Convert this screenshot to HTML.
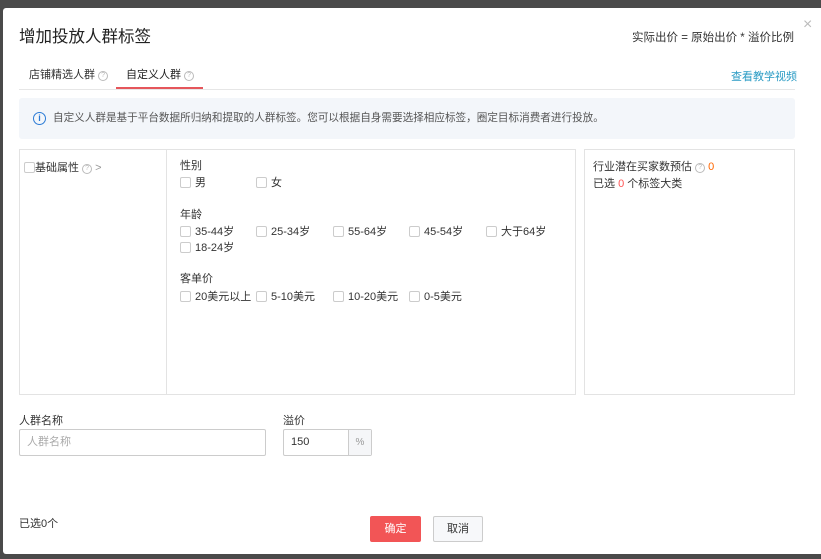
<!DOCTYPE html><html><head><meta charset="utf-8"><style>
*{margin:0;padding:0;box-sizing:border-box}
body{width:821px;height:559px;background:#4a4a4a;font-family:"Liberation Sans","Noto Sans CJK SC",sans-serif;font-size:11px;line-height:13px;color:#333;position:relative;overflow:hidden}
.a{position:absolute;white-space:nowrap}
.t{margin-top:2px}
.m{position:absolute;left:3px;top:8px;width:830px;height:546px;background:#fff;border-radius:3px}
.cb{display:inline-block;width:11px;height:11px;border:1px solid #ccc;border-radius:2px;vertical-align:-2px;margin-right:4px;background:#fff}
.q{display:inline-block;width:10px;height:10px;border:1px solid #bbb;border-radius:50%;font-size:7px;line-height:8px;text-align:center;color:#bbb;vertical-align:1px}
.o{color:#f60}
</style></head><body>
<div class="m"></div>
<div class="a" style="left:19px;top:27px;font-size:16.5px;line-height:20px;color:#222">增加投放人群标签</div>
<div class="a" style="left:632px;top:32px;font-size:11.5px;color:#333">实际出价 = 原始出价 * 溢价比例</div>
<div class="a" style="left:803px;top:18px;font-size:16px;color:#bbb">×</div>
<div class="a" style="left:29px;top:69px;color:#333">店铺精选人群 <span class="q">?</span></div>
<div class="a" style="left:126px;top:69px;color:#222">自定义人群 <span class="q">?</span></div>
<div class="a" style="left:116px;top:87px;width:87px;height:2px;background:#e5565b"></div>
<div class="a" style="left:19px;top:89px;width:776px;height:1px;background:#e6e6e6"></div>
<div class="a" style="left:731px;top:71px;color:#2a9bc4">查看教学视频</div>
<div class="a" style="left:19px;top:98px;width:776px;height:41px;background:#f3f6fa;border-radius:3px"></div>
<div class="a" style="left:33px;top:112px;width:13px;height:13px;border:1.3px solid #2b7bd6;border-radius:50%;color:#2b7bd6;font-size:9px;line-height:11px;text-align:center;font-weight:bold">i</div>
<div class="a" style="left:53px;top:112px;font-size:10.6px;color:#555">自定义人群是基于平台数据所归纳和提取的人群标签。您可以根据自身需要选择相应标签，圈定目标消费者进行投放。</div>
<div class="a" style="left:19px;top:149px;width:557px;height:246px;border:1px solid #e3e3e3"></div>
<div class="a" style="left:166px;top:150px;width:1px;height:244px;background:#e3e3e3"></div>
<div class="a" style="left:584px;top:149px;width:211px;height:246px;border:1px solid #e3e3e3"></div>
<div class="a" style="left:24px;top:162px"><span class="cb" style="margin-right:0"></span>基础属性 <span class="q">?</span> <span style="color:#999">&gt;</span></div>
<div class="a" style="left:180px;top:160px">性别</div>
<div class="a" style="left:180px;top:177px"><span class="cb"></span>男</div>
<div class="a" style="left:256px;top:177px"><span class="cb"></span>女</div>
<div class="a" style="left:180px;top:209px">年龄</div>
<div class="a" style="left:180px;top:226px"><span class="cb"></span>35-44岁</div>
<div class="a" style="left:256px;top:226px"><span class="cb"></span>25-34岁</div>
<div class="a" style="left:333px;top:226px"><span class="cb"></span>55-64岁</div>
<div class="a" style="left:409px;top:226px"><span class="cb"></span>45-54岁</div>
<div class="a" style="left:486px;top:226px"><span class="cb"></span>大于64岁</div>
<div class="a" style="left:180px;top:242px"><span class="cb"></span>18-24岁</div>
<div class="a" style="left:180px;top:273px">客单价</div>
<div class="a" style="left:180px;top:291px"><span class="cb"></span>20美元以上</div>
<div class="a" style="left:256px;top:291px"><span class="cb"></span>5-10美元</div>
<div class="a" style="left:333px;top:291px"><span class="cb"></span>10-20美元</div>
<div class="a" style="left:409px;top:291px"><span class="cb"></span>0-5美元</div>
<div class="a" style="left:593px;top:161px">行业潜在买家数预估 <span class="q">?</span> <span class="o">0</span></div>
<div class="a" style="left:593px;top:178px">已选 <span class="o" style="color:#f55">0</span> 个标签大类</div>
<div class="a" style="left:19px;top:415px">人群名称</div>
<div class="a" style="left:19px;top:429px;width:247px;height:27px;border:1px solid #ccc;border-radius:2px;padding:6px 7px;color:#aaa">人群名称</div>
<div class="a" style="left:283px;top:415px">溢价</div>
<div class="a" style="left:283px;top:429px;width:89px;height:27px;border:1px solid #ccc;border-radius:2px"></div>
<div class="a" style="left:348px;top:430px;width:23px;height:25px;background:#f5f6f8;border-left:1px solid #ccc;color:#999;font-size:10px;text-align:center;line-height:25px">%</div>
<div class="a" style="left:291px;top:436px;color:#333">150</div>
<div class="a" style="left:19px;top:518px">已选0个</div>
<div class="a" style="left:370px;top:516px;width:51px;height:26px;background:#f25556;border-radius:2px;color:#fff;text-align:center;line-height:26px">确定</div>
<div class="a" style="left:433px;top:516px;width:50px;height:26px;background:#f7f8fa;border:1px solid #ccc;border-radius:2px;text-align:center;line-height:24px">取消</div>
</body></html>
